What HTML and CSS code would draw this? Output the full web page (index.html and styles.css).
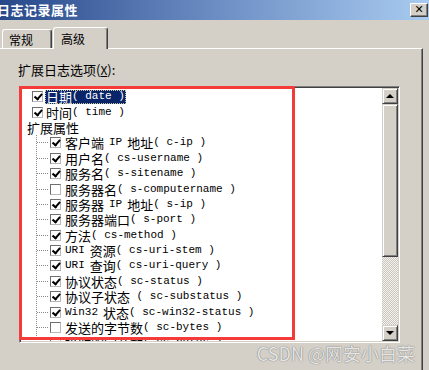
FILE: index.html
```html
<!DOCTYPE html>
<html lang="zh">
  <head>
    <meta charset="UTF-8" />
    <title>日志记录属性</title>
    <link rel="stylesheet" href="styles.css">
  </head>
  <body>
    <div class="window">
      <div class="titlebar">
        <span class="title">日志记录属性</span>
        <div class="close">&#x2715;</div>
      </div>

      <div class="tabs">
        <div class="tab">常规</div>
        <div class="tab active">高级</div>
      </div>

      <div class="panel">
        <div class="field-label">扩展日志选项(<u>X</u>):</div>

        <div class="listbox">
          <ul class="items">
            <li class="row top"><span class="cb on"></span><span class="text selected"><span class="zh">日期</span><span class="code">( date )</span></span></li>
            <li class="row top"><span class="cb on"></span><span class="text"><span class="zh">时间</span><span class="code">( time )</span></span></li>
            <li class="row group"><span class="zh">扩展属性</span></li>
            <li>
              <ul class="sub">
                <li class="row"><span class="branch"></span><span class="cb on"></span><span class="text"><span class="zh">客户端</span><span class="code word">IP</span><span class="zh">地址</span><span class="code">( c-ip )</span></span></li>
                <li class="row"><span class="branch"></span><span class="cb on"></span><span class="text"><span class="zh">用户名</span><span class="code">( cs-username )</span></span></li>
                <li class="row"><span class="branch"></span><span class="cb on"></span><span class="text"><span class="zh">服务名</span><span class="code">( s-sitename )</span></span></li>
                <li class="row"><span class="branch"></span><span class="cb"></span><span class="text"><span class="zh">服务器名</span><span class="code">( s-computername )</span></span></li>
                <li class="row"><span class="branch"></span><span class="cb on"></span><span class="text"><span class="zh">服务器</span><span class="code word">IP</span><span class="zh">地址</span><span class="code">( s-ip )</span></span></li>
                <li class="row"><span class="branch"></span><span class="cb on"></span><span class="text"><span class="zh">服务器端口</span><span class="code">( s-port )</span></span></li>
                <li class="row"><span class="branch"></span><span class="cb on"></span><span class="text"><span class="zh">方法</span><span class="code">( cs-method )</span></span></li>
                <li class="row"><span class="branch"></span><span class="cb on"></span><span class="text"><span class="code lead">URI</span><span class="zh">资源</span><span class="code">( cs-uri-stem )</span></span></li>
                <li class="row"><span class="branch"></span><span class="cb on"></span><span class="text"><span class="code lead">URI</span><span class="zh">查询</span><span class="code">( cs-uri-query )</span></span></li>
                <li class="row"><span class="branch"></span><span class="cb on"></span><span class="text"><span class="zh">协议状态</span><span class="code">( sc-status )</span></span></li>
                <li class="row"><span class="branch"></span><span class="cb on"></span><span class="text"><span class="zh">协议子状态</span><span class="code"> ( sc-substatus )</span></span></li>
                <li class="row"><span class="branch"></span><span class="cb on"></span><span class="text"><span class="code lead">Win32</span><span class="zh">状态</span><span class="code">( sc-win32-status )</span></span></li>
                <li class="row"><span class="branch"></span><span class="cb"></span><span class="text"><span class="zh">发送的字节数</span><span class="code">( sc-bytes )</span></span></li>
                <li class="row"><span class="branch"></span><span class="cb"></span><span class="text"><span class="zh">接收的字节数</span><span class="code">( cs-bytes )</span></span></li>
                <li class="row"><span class="branch"></span><span class="cb"></span><span class="text"><span class="zh">所用时间</span><span class="code">( time-taken )</span></span></li>
              </ul>
            </li>
          </ul>

          <div class="scrollbar">
            <div class="sb-btn"><span class="arrow up"></span></div>
            <div class="sb-thumb"></div>
            <div class="sb-track"></div>
            <div class="sb-btn"><span class="arrow down"></span></div>
          </div>
        </div>

        <!-- red highlight drawn over the list -->
        <div class="annotation"></div>
      </div>

      <div class="watermark">CSDN @网安小白菜</div>
    </div>
  </body>
</html>
```

FILE: styles.css
```css
body {
  margin: 0;
  background-color: #d4d0c8;
  font-family: "Noto Sans CJK SC", sans-serif;
  overflow: hidden;
}

.window {
  position: relative;
  width: 429px;
  height: 370px;
  overflow: hidden;
  background-color: #d4d0c8;
}

/* title bar */
.titlebar {
  height: 20px;
  display: flex;
  align-items: center;
  justify-content: space-between;
  padding-right: 1px;
  background: linear-gradient(to right, #27488a, #6c8dc3 50%, #a8cbf0);
}

.title {
  color: #fff;
  font-weight: bold;
  font-size: 13px;
  line-height: 20px;
  letter-spacing: 0.5px;
  margin-left: -3px;
}

.close {
  width: 18px;
  height: 14px;
  box-sizing: border-box;
  display: flex;
  align-items: center;
  justify-content: center;
  background-color: #d4d0c8;
  border: 1px solid;
  border-color: #fff #404040 #404040 #fff;
  box-shadow: inset -1px -1px #808080;
  font-family: "DejaVu Sans", sans-serif;
  font-size: 11px;
  line-height: 12px;
  font-weight: bold;
  color: #000;
}

/* tabs */
.tabs {
  position: relative;
  z-index: 1;
  display: flex;
  align-items: flex-end;
  height: 22px;
  margin-top: 6px;
  padding-left: 2px;
}

.tab {
  box-sizing: border-box;
  width: 50px;
  height: 19px;
  display: flex;
  align-items: center;
  padding-left: 6px;
  font-size: 12px;
  color: #000;
  background-color: #d4d0c8;
  border-top: 1px solid #fff;
  border-left: 1px solid #fff;
  border-right: 1px solid #404040;
  box-shadow: inset -1px 0 #808080;
  border-radius: 3px 3px 0 0;
}

.tab.active {
  width: 55px;
  height: 22px;
  margin-left: 1px;
  margin-bottom: -1px;
  padding-left: 7px;
  padding-bottom: 1px;
}

/* tab page */
.panel {
  position: relative;
  box-sizing: border-box;
  width: 426px;
  height: 322px;
  margin-left: -3px;
  padding: 13px 0 0 21px;
  border-top: 1px solid #fff;
  border-right: 1px solid #404040;
  box-shadow: inset -1px 0 #808080;
}

.field-label {
  font-size: 13px;
  line-height: 15px;
  color: #000;
}

.field-label u {
  font-size: 12px;
}

.listbox {
  box-sizing: border-box;
  width: 381px;
  height: 257px;
  margin: 9px 0 0 1px;
  display: flex;
  overflow: hidden;
  background-color: #fff;
  border: 1px solid;
  border-color: #808080 #fff #fff #808080;
  box-shadow: inset 1px 1px #404040, inset -1px -1px #d4d0c8;
  padding: 1px;
}

.items {
  flex: 1;
  margin: 0;
  padding: 1px 0 0 0;
  list-style: none;
  overflow: hidden;
}

.row {
  height: 15.4px;
  display: flex;
  align-items: center;
  white-space: nowrap;
  color: #000;
}

.row.top {
  padding-left: 11px;
}

.row.top .cb {
  margin-right: 2px;
}

.row.group {
  padding-left: 6px;
}

.sub {
  margin: 0 0 0 15px;
  padding: 0;
  list-style: none;
  border-left: 1px dotted #8a8a8a;
}

.branch {
  width: 11px;
  margin-right: 2px;
  border-top: 1px dotted #8a8a8a;
}

.zh {
  font-size: 13px;
  line-height: 15px;
  white-space: pre;
}

.code {
  font-family: "Liberation Mono", monospace;
  font-size: 11px;
  line-height: 15px;
  white-space: pre;
}

.code.word {
  padding: 0 5px;
}

.code.lead {
  padding-right: 5px;
}

.text {
  display: flex;
  align-items: center;
  height: 14px;
  padding: 0 1px;
}

.sub .text {
  margin-left: 3px;
}

.text.selected {
  background-color: #0a246a;
  color: #fff;
  outline: 1px dotted #c8c8a0;
  outline-offset: -1px;
}

/* checkboxes */
.cb {
  position: relative;
  flex: none;
  box-sizing: border-box;
  width: 11px;
  height: 11px;
  background-color: #fff;
  border: 1px solid;
  border-color: #6e6e6e #b8b8b8 #b8b8b8 #6e6e6e;
}

.cb.on::after {
  content: "";
  position: absolute;
  left: 2.5px;
  top: 0;
  width: 3px;
  height: 5.5px;
  border-right: 2px solid #000;
  border-bottom: 2px solid #000;
  transform: rotate(40deg);
}

/* scrollbar */
.scrollbar {
  flex: none;
  width: 16px;
  display: flex;
  flex-direction: column;
}

.sb-btn,
.sb-thumb {
  box-sizing: border-box;
  background-color: #d4d0c8;
  border: 1px solid;
  border-color: #d4d0c8 #404040 #404040 #d4d0c8;
  box-shadow: inset 1px 1px #fff, inset -1px -1px #808080;
}

.sb-btn {
  height: 16px;
  display: flex;
  align-items: center;
  justify-content: center;
}

.sb-thumb {
  height: 153px;
}

.sb-track {
  flex: 1;
  background: repeating-conic-gradient(#f4f3f0 0 25%, #c9c5bc 0 50%) 0 0 / 2px 2px;
}

.arrow {
  width: 0;
  height: 0;
  border-left: 4px solid transparent;
  border-right: 4px solid transparent;
}

.arrow.up {
  border-bottom: 4px solid #000;
}

.arrow.down {
  border-top: 4px solid #000;
}

/* red annotation box */
.annotation {
  position: absolute;
  left: 22px;
  top: 37px;
  width: 276px;
  height: 254px;
  box-sizing: border-box;
  border: 3px solid #f53a3a;
}

.watermark {
  position: absolute;
  right: 14px;
  bottom: 6px;
  font-family: "Noto Sans CJK SC", sans-serif;
  font-size: 18px;
  line-height: 22px;
  color: rgba(250, 250, 250, 0.85);
  text-shadow: 0 0 1px #777, 0 0 1px #888;
}
```
